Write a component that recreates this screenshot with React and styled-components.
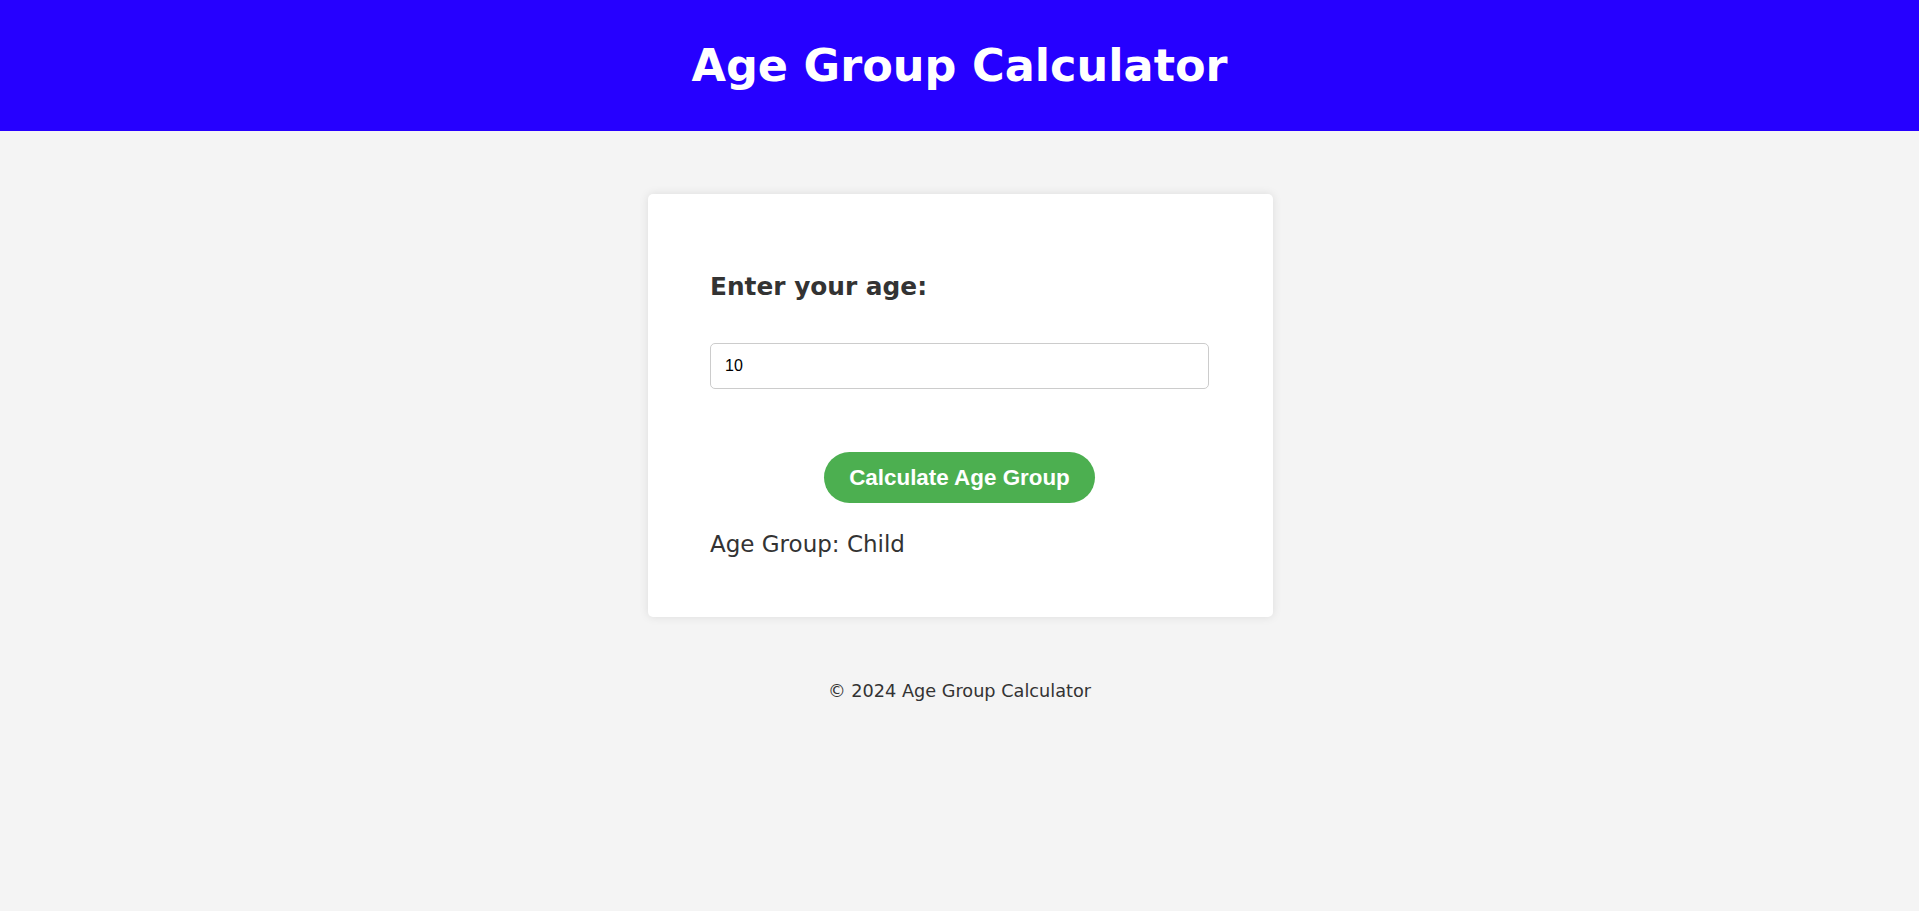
import React, { useState } from "react";
import styled, { createGlobalStyle } from "styled-components";

const GlobalStyle = createGlobalStyle`
  body {
    margin: 0;
    background-color: #f4f4f4;
    font-family: "DejaVu Sans", Verdana, sans-serif;
    color: #333;
  }
`;

const getAgeGroup = (age) => {
  const n = Number(age);
  if (Number.isNaN(n) || age === "") return "";
  if (n < 13) return "Child";
  if (n < 20) return "Teenager";
  if (n < 65) return "Adult";
  return "Senior";
};

const App = () => {
  const [age, setAge] = useState("10");
  const [group, setGroup] = useState("Child");

  return (
    <>
      <GlobalStyle />
      <Header>
        <Title>Age Group Calculator</Title>
      </Header>
      <Main>
        <Card>
          <Label htmlFor="age">Enter your age:</Label>
          <AgeInput
            id="age"
            type="number"
            value={age}
            onChange={(e) => setAge(e.target.value)}
          />
          <ButtonRow>
            <CalcButton onClick={() => setGroup(getAgeGroup(age))}>
              Calculate Age Group
            </CalcButton>
          </ButtonRow>
          <Result>Age Group: {group}</Result>
        </Card>
      </Main>
      <Footer>© 2024 Age Group Calculator</Footer>
    </>
  );
};

const Header = styled.header`
  height: 131px;
  background-color: #2600ff;
  display: flex;
  align-items: center;
  justify-content: center;
`;

const Title = styled.h1`
  margin: 0;
  color: #fff;
  font-size: 44.6px;
  font-weight: bold;
  line-height: normal;
`;

const Main = styled.main`
  display: flex;
  justify-content: center;
  padding-top: 63px;
`;

const Card = styled.section`
  width: 625px;
  box-sizing: border-box;
  background-color: #fff;
  border-radius: 5px;
  box-shadow: 0 0 10px rgba(0, 0, 0, 0.1);
  padding: 78px 64px 60px 62px;
  margin-left: 2px;
  display: flex;
  flex-direction: column;
`;

const Label = styled.label`
  font-size: 24.8px;
  font-weight: bold;
  line-height: normal;
  color: #333;
`;

const AgeInput = styled.input`
  margin-top: 42px;
  height: 46px;
  box-sizing: border-box;
  width: 100%;
  border: 1px solid #ccc;
  border-radius: 5px;
  padding: 0 14px;
  font-family: "Liberation Sans", Arial, sans-serif;
  font-size: 16px;
  color: #000;
  outline: none;
  -moz-appearance: textfield;

  &::-webkit-outer-spin-button,
  &::-webkit-inner-spin-button {
    -webkit-appearance: none;
    margin: 0;
  }
`;

const ButtonRow = styled.div`
  display: flex;
  justify-content: center;
  margin-top: 63px;
`;

const CalcButton = styled.button`
  height: 51px;
  padding: 0 25px;
  border: none;
  border-radius: 26px;
  background-color: #4caf50;
  color: #fff;
  font-family: "Liberation Sans", Arial, sans-serif;
  font-size: 22.4px;
  font-weight: bold;
  cursor: pointer;

  :hover {
    background-color: #45a049;
  }
`;

const Result = styled.p`
  margin: 28px 0 0;
  font-size: 23px;
  line-height: normal;
  color: #333;
`;

const Footer = styled.footer`
  text-align: center;
  padding-top: 64px;
  font-size: 17.7px;
  line-height: normal;
  color: #333;
`;

export default App;
